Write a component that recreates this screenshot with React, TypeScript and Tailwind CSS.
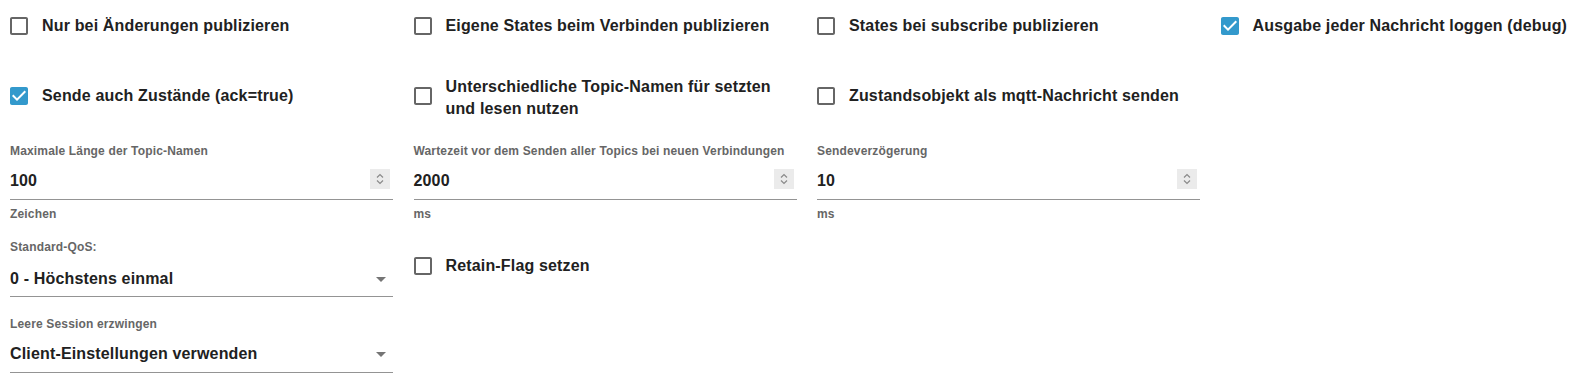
import React from "react";

const UNCHECKED =
  "M19 5v14H5V5h14m0-2H5c-1.1 0-2 .9-2 2v14c0 1.1.9 2 2 2h14c1.1 0 2-.9 2-2V5c0-1.1-.9-2-2-2z";
const CHECKED =
  "M19 3H5c-1.11 0-2 .9-2 2v14c0 1.1.89 2 2 2h14c1.11 0 2-.9 2-2V5c0-1.1-.89-2-2-2zm-9 14l-5-5 1.41-1.41L10 14.17l7.59-7.59L19 8l-9 9z";

function Check({ checked = false, children, textClass = "" }: { checked?: boolean; children: React.ReactNode; textClass?: string }) {
  return (
    <div className="flex items-center h-[52px]">
      <svg viewBox="0 0 24 24" className="w-6 h-6 -ml-[3px] shrink-0" fill={checked ? "#3399cc" : "#666666"}>
        <path d={checked ? CHECKED : UNCHECKED} />
      </svg>
      <span className={`ml-[11px] max-w-[345px] text-[16px] leading-[22px] font-bold text-[#212121] ${textClass}`}>{children}</span>
    </div>
  );
}

function NumberField({ label, value, helper }: { label: string; value: string; helper: string }) {
  return (
    <div className="w-[383px]">
      <div className="text-[12px] leading-4 font-bold text-[#666666] whitespace-nowrap">{label}</div>
      <div className="flex items-center justify-between pt-[10px] pb-[6px] border-b border-[#949494]">
        <span className="text-[16px] leading-6 font-bold text-[#212121]">{value}</span>
        <svg viewBox="0 0 20 20" className="w-5 h-5 mr-[3px] mb-[4px]">
          <rect x="0" y="0" width="20" height="20" fill="#ebebeb" />
          <path d="M7 8.5 L10 5.5 L13 8.5" fill="none" stroke="#8a8a8a" strokeWidth="1.2" />
          <path d="M7 11.5 L10 14.5 L13 11.5" fill="none" stroke="#8a8a8a" strokeWidth="1.2" />
        </svg>
      </div>
      <div className="mt-[6px] text-[12px] leading-4 font-bold text-[#666666]">{helper}</div>
    </div>
  );
}

function SelectField({ label, value, boxClass }: { label: string; value: string; boxClass: string }) {
  return (
    <div className="w-[383px]">
      <div className="text-[12px] leading-4 font-bold text-[#666666]">{label}</div>
      <div className={`flex items-center justify-between border-b border-[#949494] ${boxClass}`}>
        <span className="text-[16px] leading-6 font-bold text-[#212121]">{value}</span>
        <svg viewBox="0 0 10 5" className="w-[10px] h-[5px] mr-[7px]">
          <path d="M0 0 L5 5 L10 0 Z" fill="#757575" />
        </svg>
      </div>
    </div>
  );
}

const ROW = "grid grid-cols-[403.5px_403.5px_403.5px_1fr]";

export default function App() {
  return (
    <div className="w-[1588px] h-[391px] overflow-hidden bg-white pl-[10px] tracking-[0.01em] font-['Liberation_Sans',Arial,sans-serif]">
      <div className={`${ROW}`}>
        <Check>Nur bei Änderungen publizieren</Check>
        <Check>Eigene States beim Verbinden publizieren</Check>
        <Check>States bei subscribe publizieren</Check>
        <Check checked>Ausgabe jeder Nachricht loggen (debug)</Check>
      </div>
      <div className={`${ROW} mt-[18px]`}>
        <Check checked>Sende auch Zustände (ack=true)</Check>
        <Check textClass="pt-[4px]">Unterschiedliche Topic-Namen für setzten und lesen nutzen</Check>
        <Check>Zustandsobjekt als mqtt-Nachricht senden</Check>
        <div />
      </div>
      <div className={`${ROW} mt-[21px]`}>
        <NumberField label="Maximale Länge der Topic-Namen" value="100" helper="Zeichen" />
        <NumberField label="Wartezeit vor dem Senden aller Topics bei neuen Verbindungen" value="2000" helper="ms" />
        <NumberField label="Sendeverzögerung" value="10" helper="ms" />
        <div />
      </div>
      <div className={`${ROW} mt-[17px]`}>
        <SelectField label="Standard-QoS:" value="0 - Höchstens einmal" boxClass="pt-[12px] pb-[5px]" />
        <div className="mt-[1px]">
          <Check>Retain-Flag setzen</Check>
        </div>
        <div />
        <div />
      </div>
      <div className={`${ROW} mt-[19px]`}>
        <SelectField label="Leere Session erzwingen" value="Client-Einstellungen verwenden" boxClass="pt-[10px] pb-[6px]" />
        <div />
        <div />
        <div />
      </div>
    </div>
  );
}
